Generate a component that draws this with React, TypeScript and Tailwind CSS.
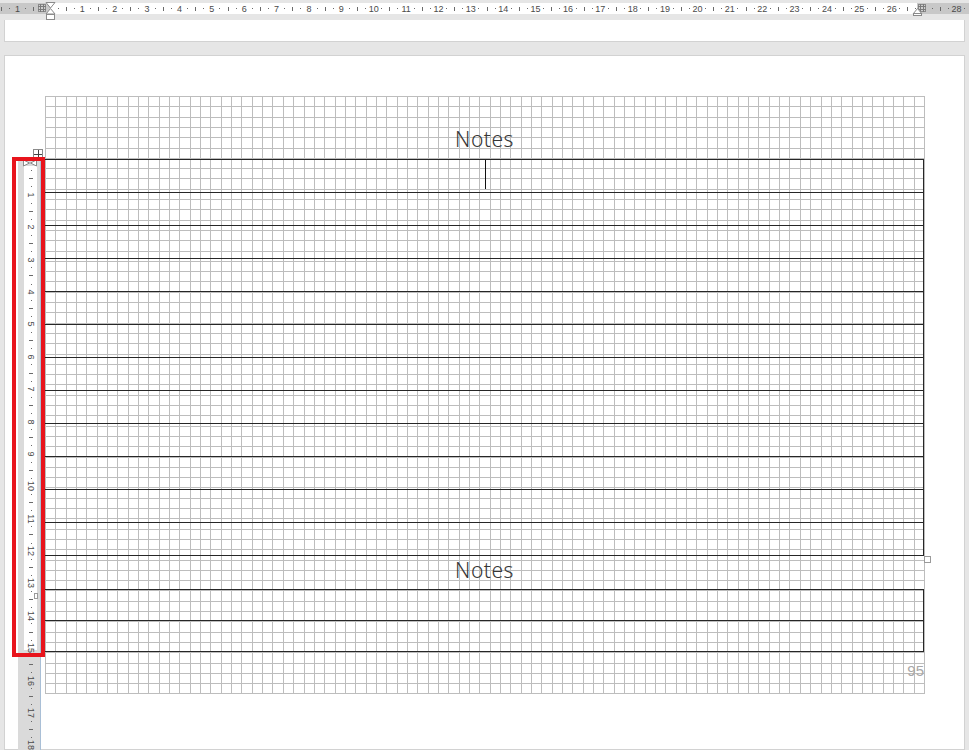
import React from "react";

const CM = 32.4;

function Hatch() {
  return (
    <svg width="8" height="8" viewBox="0 0 8 8">
      <rect x="0.5" y="0.5" width="7" height="7" fill="#d0d0d0" stroke="#8a8a8a" />
      <line x1="2.5" y1="0" x2="2.5" y2="8" stroke="#7a7a7a" />
      <line x1="5.5" y1="0" x2="5.5" y2="8" stroke="#7a7a7a" />
      <line x1="0" y1="2.5" x2="8" y2="2.5" stroke="#7a7a7a" />
      <line x1="0" y1="5.5" x2="8" y2="5.5" stroke="#7a7a7a" />
    </svg>
  );
}

function Mark({ n, q, vertical }: { n: number; q: number; vertical?: boolean }) {
  if (q === 0) {
    if (n === 0 || n === -2 || (!vertical && n === 27)) return <span />;
    return (
      <span
        className={`text-[9px] leading-[10px] text-[#4a4a4a] font-['Liberation_Sans',sans-serif] whitespace-nowrap ${
          vertical ? "rotate-90" : ""
        }`}
      >
        {Math.abs(n)}
      </span>
    );
  }
  if (q === 2) {
    return <span className={vertical ? "w-[4px] h-[1px] bg-[#6a6a6a]" : "w-[1px] h-[4px] bg-[#6a6a6a]"} />;
  }
  return <span className="w-[1px] h-[1px] bg-[#6a6a6a]" />;
}

function TopRuler() {
  const cells: React.ReactNode[] = [];
  for (let n = -2; n <= 28; n++) {
    for (let q = 0; q < 4; q++) {
      cells.push(
        <div key={`${n}-${q}`} className="w-[8.1px] shrink-0 h-full flex items-center justify-center">
          <Mark n={n} q={q} />
        </div>
      );
    }
  }
  return (
    <div className="relative h-[20px] shrink-0 pt-[3px]">
      <div className="h-[11px] flex">
        <div className="w-[50px] bg-[#c8c8c8]" />
        <div className="w-[867px] bg-white" />
        <div className="flex-1 bg-[#c8c8c8]" />
      </div>
      {/* scale marks */}
      <div className="absolute left-[-18.85px] top-[3px] h-[11px] flex">{cells}</div>
      {/* column markers */}
      <div className="absolute left-[38px] top-[4px]">
        <Hatch />
      </div>
      <div className="absolute left-[918px] top-[4px]">
        <Hatch />
      </div>
      {/* left indent marker */}
      <svg className="absolute left-[45px] top-[2px]" width="11" height="18" viewBox="0 0 11 18">
        <path d="M1 0.5 H10 L5.5 6 Z" fill="#fff" stroke="#8a8a8a" />
        <path d="M5.5 6.5 L10 12 H1 Z" fill="#fff" stroke="#8a8a8a" />
        <rect x="1.5" y="12.5" width="8" height="5" fill="#fff" stroke="#8a8a8a" />
      </svg>
      {/* right indent marker */}
      <svg className="absolute left-[912px] top-[8px]" width="11" height="8" viewBox="0 0 11 8">
        <path d="M5.5 0.5 L10 6 H1 Z" fill="#fff" stroke="#8a8a8a" />
        <rect x="1.5" y="5.5" width="8" height="2" fill="#fff" stroke="#8a8a8a" />
      </svg>
    </div>
  );
}

function LeftRuler() {
  const cells: React.ReactNode[] = [];
  for (let n = 0; n <= 18; n++) {
    for (let q = 0; q < 4; q++) {
      cells.push(
        <div key={`${n}-${q}`} className="h-[8.1px] shrink-0 w-full flex items-center justify-center">
          {n === 0 && q === 0 ? <span /> : <Mark n={n} q={q} vertical />}
        </div>
      );
    }
  }
  return (
    <div className="absolute left-[18px] top-[158px] w-[23px] h-[600px] bg-[#dadada] border-r border-[#a9bfd6] overflow-hidden">
      <div className="absolute left-[6px] top-[8px] w-[13px] h-[484px] bg-white" />
      <svg className="absolute left-[5px] top-[1px]" width="14" height="8" viewBox="0 0 14 8">
        <path d="M0.5 1 V7 L6.5 4 Z" fill="#fff" stroke="#8a8a8a" />
        <path d="M13.5 1 V7 L7.5 4 Z" fill="#fff" stroke="#8a8a8a" />
      </svg>
      <div className="absolute left-[1px] top-[0.55px] w-[24px] flex flex-col">{cells}</div>
      <div className="absolute left-[16px] top-[435px] w-[4px] h-[6px] bg-white border border-[#9a9a9a]" />
    </div>
  );
}

function Grid() {
  const cols = 85;
  const rows = 58;
  const sx = 10.34;
  const sy = 10.3;
  const w = cols * sx;
  const h = rows * sy;
  const lines: React.ReactNode[] = [];
  for (let i = 0; i <= cols; i++) {
    const x = Math.round(i * sx) + 0.5;
    lines.push(<line key={`v${i}`} x1={x} y1={0} x2={x} y2={h + 1} />);
  }
  for (let j = 0; j <= rows; j++) {
    const y = Math.round(j * sy) + 0.5;
    lines.push(<line key={`h${j}`} x1={0} y1={y} x2={w + 1} y2={y} />);
  }
  return (
    <svg
      className="absolute left-[40px] top-[40px]"
      width={Math.ceil(w) + 2}
      height={Math.ceil(h) + 2}
      stroke="#bdbdbd"
      strokeWidth="1"
      shapeRendering="crispEdges"
    >
      {lines}
    </svg>
  );
}

function Title({ className }: { className: string }) {
  return (
    <div className={className}>
      <div className="text-center text-[21px] leading-[28px] tracking-[0.5px] text-[#363636] font-light font-['Noto_Sans',sans-serif]">
        Notes
      </div>
    </div>
  );
}

export default function App() {
  const rows1 = Array.from({ length: 12 });
  return (
    <div className="relative w-[969px] h-[750px] overflow-hidden bg-[#e6e6e6] flex flex-col">
      <TopRuler />
      <div className="h-[22px] mx-[4px] bg-white border border-t-0 border-[#d2d2d2] shrink-0" />
      <div className="h-[13px] shrink-0" />
      <div className="relative mx-[4px] flex-1 bg-white border border-[#d2d2d2]">
        <Grid />
        <div className="relative ml-[40px] w-[879px] pt-[40px] flex flex-col">
          <Title className="h-[63px] pt-[29px]" />
          <div className="relative border-t border-r border-[#262626]">
            {rows1.map((_, i) => (
              <div key={i} className={`h-[33px] border-b border-[#262626] ${i === 0 ? "flex justify-center" : ""}`}>
                {i === 0 && <span className="ml-[2px] w-[1px] h-[29px] bg-[#111]" />}
              </div>
            ))}
            {/* table resize handle */}
            <div className="absolute right-[-8px] bottom-[-7px] w-[7px] h-[7px] bg-white border border-[#9a9a9a]" />
            {/* table move handle */}
            <div className="absolute left-[-12px] top-[-11px] w-[10px] h-[10px] bg-white border border-[#8a8a8a] flex items-center justify-center">
              <svg width="8" height="8" viewBox="0 0 8 8" stroke="#444" strokeWidth="1" fill="none" shapeRendering="crispEdges">
                <line x1="4.5" y1="0" x2="4.5" y2="8" />
                <line x1="0" y1="4.5" x2="8" y2="4.5" />
              </svg>
            </div>
          </div>
          <Title className="h-[33px]" />
          <div className="border-t border-r border-[#262626]">
            <div className="h-[31px] border-b border-[#262626]" />
            <div className="h-[31px] border-b border-[#262626]" />
          </div>
          <div className="mt-[10px] text-right text-[15px] leading-[17px] text-[#a8a8a8] font-['Liberation_Sans',sans-serif]">
            95
          </div>
        </div>
      </div>
      <LeftRuler />
      {/* red highlight */}
      <div className="absolute left-[12px] top-[157px] w-[33px] h-[500px] border-[4px] border-[#e8141c]" />
    </div>
  );
}
